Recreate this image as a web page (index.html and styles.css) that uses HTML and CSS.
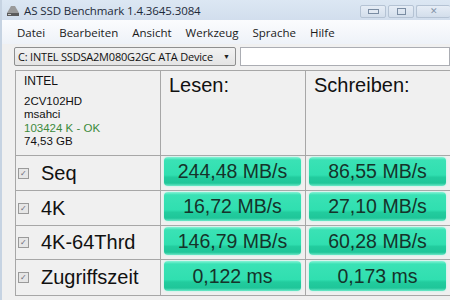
FILE: index.html
```html
<!DOCTYPE html>
<html>
<head>
<meta charset="utf-8">
<link rel="stylesheet" href="styles.css">
</head>
<body>
<div class="window">
  <div class="titlebar">
    <svg class="appicon" width="14" height="12" viewBox="0 0 14 12">
      <path d="M5 1 L9 1 L13 8 L1 8 Z" fill="#9a9a9a"/>
      <rect x="1" y="8" width="12" height="3" fill="#5a5a5a"/>
      <rect x="2" y="9" width="3" height="1" fill="#c8c8c8"/>
    </svg>
    <span class="title">AS SSD Benchmark 1.4.3645.3084</span>
    <div class="winbtns">
      <div class="wbtn"><span class="min"></span></div>
      <div class="wbtn"><span class="max"></span></div>
      <div class="wbtn close"><span class="x">&#x2715;</span></div>
    </div>
  </div>
  <div class="menubar">
    <span>Datei</span><span>Bearbeiten</span><span>Ansicht</span><span>Werkzeug</span><span>Sprache</span><span>Hilfe</span>
  </div>
  <div class="toolbar">
    <div class="combo"><span class="combo-text">C: INTEL SSDSA2M080G2GC ATA Device</span><span class="arrow">&#9660;</span></div>
    <div class="textbox"></div>
  </div>
  <div class="grid">
    <div class="cell info">
      <div class="l1">INTEL</div>
      <div class="l2">2CV102HD</div>
      <div>msahci</div>
      <div class="ok">103424 K - OK</div>
      <div>74,53 GB</div>
    </div>
    <div class="cell head">Lesen:</div>
    <div class="cell head">Schreiben:</div>

    <div class="cell label"><span class="cb">&#10003;</span>Seq</div>
    <div class="cell val"><div class="bar">244,48 MB/s</div></div>
    <div class="cell val"><div class="bar">86,55 MB/s</div></div>

    <div class="cell label"><span class="cb">&#10003;</span>4K</div>
    <div class="cell val"><div class="bar">16,72 MB/s</div></div>
    <div class="cell val"><div class="bar">27,10 MB/s</div></div>

    <div class="cell label"><span class="cb">&#10003;</span>4K-64Thrd</div>
    <div class="cell val"><div class="bar">146,79 MB/s</div></div>
    <div class="cell val"><div class="bar">60,28 MB/s</div></div>

    <div class="cell label"><span class="cb">&#10003;</span>Zugriffszeit</div>
    <div class="cell val"><div class="bar">0,122 ms</div></div>
    <div class="cell val"><div class="bar">0,173 ms</div></div>
  </div>
</div>
</body>
</html>
```

FILE: styles.css
```css
html, body {
  margin: 0;
  padding: 0;
  width: 450px;
  height: 300px;
  overflow: hidden;
  background: #f0f0f0;
}
.window {
  width: 450px;
  height: 300px;
  display: flex;
  flex-direction: column;
  font-family: "Liberation Sans", Arial, sans-serif;
  background: #f0f0f0;
  border-left: 2px solid #c6d3e2;
  box-sizing: border-box;
}
.titlebar {
  height: 20px;
  display: flex;
  align-items: center;
  background: linear-gradient(#dce7f3, #d2deed);
  padding-left: 4px;
  flex-shrink: 0;
}
.appicon { margin-right: 4px; margin-top: 1px; }
.title {
  font-family: "Open Sans", "Noto Sans", sans-serif;
  font-size: 11.5px;
  color: #1e2a3a;
  letter-spacing: -0.1px;
}
.winbtns {
  margin-left: auto;
  display: flex;
  gap: 2px;
  align-self: flex-start;
  margin-top: 5px;
}
.wbtn {
  width: 26px;
  height: 13px;
  border: 1px solid #b5c3d4;
  border-radius: 2px;
  background: linear-gradient(#e6edf6, #d3deeb);
  display: flex;
  align-items: center;
  justify-content: center;
  box-sizing: border-box;
}
.wbtn.close { width: 34px; border-right: none; }
.min { width: 9px; height: 3px; border: 1px solid #7a8ca2; background: #e2e9f2; }
.max { width: 7px; height: 5px; border: 1px solid #7a8ca2; }
.x { font-size: 9px; color: #8494a8; line-height: 1; }
.menubar {
  height: 24px;
  display: flex;
  align-items: center;
  background: linear-gradient(#fbfcfe, #eef2f8);
  font-family: "Open Sans", "Noto Sans", sans-serif;
  font-size: 11.5px;
  color: #1a1a1a;
  padding-left: 8px;
  flex-shrink: 0;
}
.menubar span { padding: 0 7px; }
.toolbar {
  display: flex;
  gap: 4px;
  padding: 3px 0 0 12px;
  height: 26px;
  box-sizing: border-box;
  flex-shrink: 0;
}
.combo {
  width: 222px;
  height: 19px;
  border: 1px solid #8e8f8f;
  border-radius: 2px;
  background: linear-gradient(#f2f2f2, #e4e4e4);
  display: flex;
  align-items: center;
  box-sizing: border-box;
  font-family: "Open Sans", "Noto Sans", sans-serif;
  font-size: 11px;
  color: #111;
  padding-left: 3px;
}
.combo-text { flex: 1; letter-spacing: -0.2px; }
.arrow { font-size: 7px; padding-right: 5px; color: #222; }
.textbox {
  flex: 1;
  height: 19px;
  border: 1px solid #abadb3;
  background: #fff;
  box-sizing: border-box;
}
.grid {
  margin-left: 13px;
  display: grid;
  grid-template-columns: 145px 145px 145px;
  grid-template-rows: 85px 35px 35px 34px 36px;
  border-top: 1px solid #a7a7a7;
  border-left: 1px solid #a7a7a7;
}
.cell {
  border-right: 1px solid #a7a7a7;
  border-bottom: 1px solid #a7a7a7;
  box-sizing: border-box;
  background: #f0f0f0;
}
.info {
  font-size: 11.5px;
  color: #111;
  padding: 4px 0 0 8px;
  line-height: 13.5px;
}
.info .l1 { margin-bottom: 6px; font-size: 12px; }
.info .ok { color: #3c8a3c; }
.head {
  font-size: 20px;
  color: #111;
  padding: 2px 0 0 8px;
  line-height: 24px;
}
.label {
  display: flex;
  align-items: center;
  font-size: 20px;
  color: #111;
  padding-left: 2px;
}
.cb {
  width: 9px;
  height: 9px;
  border: 1px solid #9a9a9a;
  background: #e6e6e6;
  font-size: 8px;
  line-height: 9px;
  text-align: center;
  color: #6a6a7a;
  margin-right: 12px;
  flex-shrink: 0;
}
.val {
  padding: 1px 4px 4px 3px;
  display: flex;
}
.bar {
  flex: 1;
  border-radius: 4px;
  background: linear-gradient(#86f3d6 0%, #3ae2b5 10%, #30dfb0 62%, #22cc9e 70%, #1fc699 90%, #6ce9c8 100%);
  box-shadow: 0 0 2px #9ff7e0;
  display: flex;
  align-items: center;
  justify-content: center;
  font-size: 19.5px;
  color: #15332a;
}
```
